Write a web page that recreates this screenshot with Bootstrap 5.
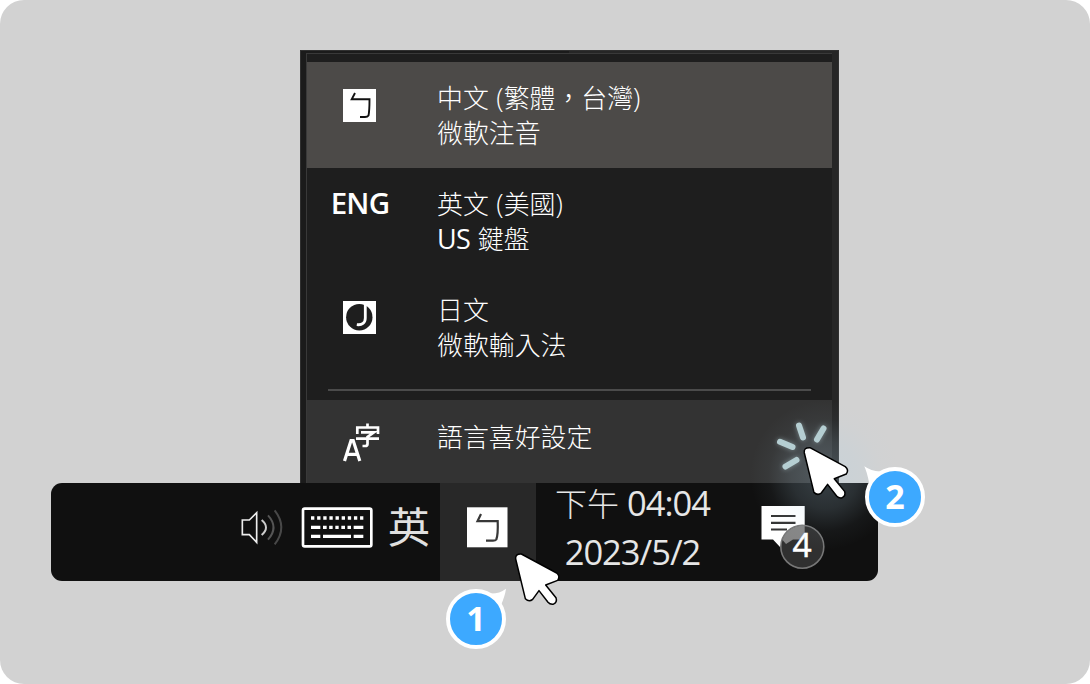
<!DOCTYPE html>
<html lang="zh-Hant">
<head>
<meta charset="utf-8">
<meta name="viewport" content="width=device-width, initial-scale=1">
<title>語言喜好設定</title>
<link href="https://cdn.jsdelivr.net/npm/bootstrap@5.3.0/dist/css/bootstrap.min.css" rel="stylesheet">
<style>
body { background:#fff; font-family:"Open Sans","Noto Sans CJK TC",sans-serif; }
svg { display:block; }
.stage { width:1090px; height:684px; background:#d2d2d2; border-radius:24px; padding:50px 0 0 50px; }
.ime-menu { width:539px; height:433px; margin-left:250px; background:linear-gradient(90deg,#1b1b1b 50%,#262626 50%); border:solid #303030; border-width:1px 1px 0 1px; padding:2px 6px 0 5px; }
.ime-inner { height:430px; background:#1e1e1e; border:solid #393939; border-width:1px 0 0 1px; padding-top:8px; }
.ime-row { height:106px; color:#fff; font-weight:300; font-size:25.9px; line-height:35px; font-family:"Noto Sans CJK TC",sans-serif; }
.ime-row.chosen { background:#4c4a48; }
.ime-row.prefs { height:84px; background:#333; }
.ime-icon { width:106px; flex:none; }
.ime-label { padding-left:24px; padding-top:17px; white-space:nowrap; word-spacing:1.8px; }
.prefs .ime-label { padding-top:18px; }
.ime-label .lat { font-family:"Open Sans",sans-serif; font-weight:400; font-size:27px; letter-spacing:-.6px; line-height:1; }
.ime-label .paren { font-family:"Open Sans",sans-serif; font-weight:300; font-size:27px; line-height:1; }
.eng { font:600 29.5px/36px "Open Sans",sans-serif; padding-top:17px; letter-spacing:-.8px; }
.rule { height:2px; background:#4b4b4b; margin:9px 21px 9px 21px; }
.task { width:827px; height:98px; margin-left:1px; background:#101010; border-radius:11px; color:#e6e6e6; }
.mode { font:400 42px/60px "Noto Sans CJK TC",sans-serif; }
.cell-on { width:96px; height:98px; background:#282828; }
.clock { width:193px; margin-top:-5px; font:400 34.5px/49px "Open Sans","Noto Sans CJK TC",sans-serif; letter-spacing:-1px; white-space:nowrap; }
.clock .cjk { font-family:"Noto Sans CJK TC",sans-serif; font-weight:300; font-size:32px; letter-spacing:0; line-height:1; }
.overlay { inset:0; width:1090px; height:684px; pointer-events:none; }
.step { width:60px; height:60px; border:4px solid #fff; border-radius:50%; background:#3da9ff; color:#fff; font:700 34px/50px "Open Sans",sans-serif; text-align:center; }
.step-one { left:446px; top:589px; }
.step-two { left:865px; top:467px; }
.glow { left:750px; top:400px; width:150px; height:150px; background:radial-gradient(closest-side,rgba(175,210,230,.26),rgba(175,210,230,.16) 45%,rgba(175,210,230,.04) 75%,rgba(175,210,230,0)); }
</style>
<script src="https://cdn.jsdelivr.net/npm/bootstrap@5.3.0/dist/js/bootstrap.bundle.min.js"></script>
</head>
<body>
<main class="stage position-relative overflow-hidden">
  <section class="ime-menu">
    <div class="ime-inner">
      <div class="ime-row chosen d-flex">
        <div class="ime-icon"><svg width="106" height="106" viewBox="307 62 106 106"><rect x="343" y="89" width="33" height="33" fill="#fff"/><path d="M355 93L351.7 99.3H369.5C369.5 107 369.3 112 368.5 115.5Q367.5 117 365 117H360" fill="none" stroke="#111" stroke-width="1.9"/></svg></div>
        <div class="ime-label"><div>中文 <span class="paren">(</span>繁體，台灣<span class="paren">)</span></div><div>微軟注音</div></div>
      </div>
      <div class="ime-row d-flex">
        <div class="ime-icon eng text-center">ENG</div>
        <div class="ime-label"><div>英文 <span class="paren">(</span>美國<span class="paren">)</span></div><div><span class="lat">US</span> 鍵盤</div></div>
      </div>
      <div class="ime-row d-flex">
        <div class="ime-icon"><svg width="106" height="106" viewBox="307 274 106 106"><rect x="343" y="301" width="33" height="33" fill="#fff"/><circle cx="359.3" cy="317.2" r="13.2" fill="#1e1e1e"/><path d="M365.3 304V318C365.3 323 362 325.3 356.8 324.6" fill="none" stroke="#fff" stroke-width="2.8"/></svg></div>
        <div class="ime-label"><div>日文</div><div>微軟輸入法</div></div>
      </div>
      <div class="rule"></div>
      <div class="ime-row prefs d-flex">
        <div class="ime-icon"><svg width="106" height="84" viewBox="307 400 106 84" fill="none" stroke="#fff"><path d="M344.5 461L351 440.5H353.2L359.8 461M347 454.3H357.5" stroke-width="3.2"/><path d="M357.3 434V427.5H378V434M367.5 427V423.5M361 432.3H374L367.5 437V444Q367.5 446 365 446H362.5M356 438.7H379" stroke-width="2.7"/></svg></div>
        <div class="ime-label">語言喜好設定</div>
      </div>
    </div>
  </section>

  <section class="task d-flex">
    <svg width="389" height="98" viewBox="51 483 389 98" class="flex-shrink-0">
      <g transform="translate(220 475) scale(.33333)" fill="none" stroke-width="5">
        <path d="M67 135H88L110 113V202L88 179H67Z" stroke="#eee"/>
        <path d="M125 135Q151 157 125 180" stroke="#ccc" stroke-width="6"/>
        <path d="M144 121Q177 157 144 194" stroke="#555" stroke-width="6"/>
        <path d="M164 106Q204 157 164 208" stroke="#484848" stroke-width="6"/>
        <rect x="249" y="101" width="205" height="113" rx="5" stroke="#fff" stroke-width="8"/>
        <path d="M273 129H430" stroke="#fff" stroke-width="10" stroke-dasharray="10 8.4"/>
        <path d="M273 157H301M309 157H320M327.5 157H338M346 157H356M364 157H375M382.5 157H393M401 157H430M273 184H301M309 184H393M401 184H430" stroke="#fff" stroke-width="10"/>
      </g>
      <text x="388" y="543" class="mode" fill="#e0e0e0">英</text>
    </svg>
    <div class="cell-on flex-shrink-0"><svg width="96" height="98" viewBox="440 483 96 98"><rect x="467" y="507.3" width="40.5" height="40" fill="#fff"/><path d="M481 514L477.5 521.2H497.7C498 529 498 535 496.3 539.5Q495.5 540.7 493 540.7H486" fill="none" stroke="#383838" stroke-width="2.2"/></svg></div>
    <div class="clock text-center flex-shrink-0"><div><span class="cjk">下午</span> 04:04</div><div>2023/5/2</div></div>
  </section>

  <svg class="overlay position-absolute" viewBox="0 0 1090 684">
    <path d="M761.5 506H804.7V539.5H787L780 547L773 539.5H761.5Z" fill="#fff"/>
    <path d="M771 516H795.5M771 522.8H795.5M771 529.5H787" stroke="#333" stroke-width="2.2"/>
    <circle cx="802.3" cy="546.7" r="21.5" fill="#303030" stroke="#777" stroke-width="1.6"/>
    <path d="M782.5 540Q787 526 804.7 525.5V539.5H793L786 544Z" fill="#858585"/>
    <text x="802" y="556.7" text-anchor="middle" font-family="Open Sans" font-size="33.5" fill="#fff" stroke="#fff" stroke-width=".5">4</text>
  </svg>
  <div class="glow position-absolute"></div>
  <div class="step step-one position-absolute">1</div>
  <div class="step step-two position-absolute">2</div>
  <svg class="overlay position-absolute" viewBox="0 0 1090 684">
    <defs>
      <path id="pointer" d="M274 237L380 294Q392 304 383 316L347 330L378 368Q383 382 369 388Q360 389 354 382L327 347L308 373Q297 382 286 371L257 252Q255 236 274 237Z" fill="#fff" stroke="#000" stroke-width="4.5" stroke-linejoin="round"/>
      <filter id="soft" x="-50%" y="-50%" width="200%" height="200%"><feGaussianBlur stdDeviation="2.5"/></filter>
    </defs>
    <path d="M490 593.5Q499 594 506 588.7Q505 596 501 605Z" fill="#fff"/>
    <path d="M864.3 466.3Q871 471 880 471.5L869 482.5Q867 472 864.3 466.3Z" fill="#fff"/>
    <g fill="none" stroke-linecap="round" stroke-width="6" stroke="#b5ced2">
      <path d="M799 425.5L803 437.5M823.5 428.5L817 439.5M780 441.8L792.5 447M785.5 466.5L796.5 460" opacity=".5" filter="url(#soft)"/>
      <path d="M799 425.5L803 437.5M823.5 428.5L817 439.5M780 441.8L792.5 447M785.5 466.5L796.5 460"/>
    </g>
    <use href="#pointer" transform="translate(430 475) scale(.33333)"/>
    <use href="#pointer" transform="translate(718.6 368.7) scale(.33333)"/>
  </svg>
</main>
</body>
</html>
